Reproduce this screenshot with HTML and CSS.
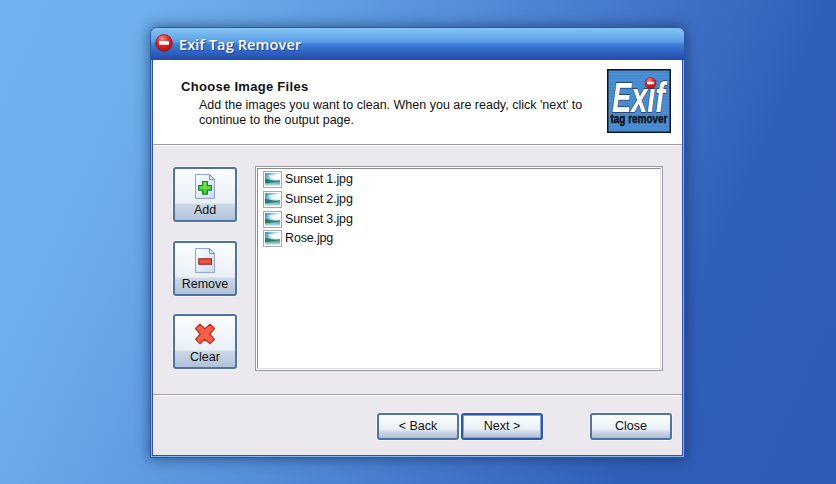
FILE: index.html
```html
<!DOCTYPE html>
<html lang="en">
<head>
<meta charset="utf-8">
<title>Exif Tag Remover</title>
<link rel="stylesheet" href="styles.css">
</head>
<body>
<svg class="defs" width="0" height="0" aria-hidden="true">
  <defs>
    <radialGradient id="red" cx=".4" cy=".25" r=".8"><stop offset="0" stop-color="#f98a80"/><stop offset=".45" stop-color="#e02a25"/><stop offset="1" stop-color="#ab0f12"/></radialGradient>
    <linearGradient id="page" x1="0" y1="0" x2="1" y2="1"><stop offset="0" stop-color="#fff"/><stop offset="1" stop-color="#c9dcf8"/></linearGradient>
    <linearGradient id="green" x1="0" y1="0" x2="0" y2="1"><stop offset="0" stop-color="#8df06a"/><stop offset="1" stop-color="#3ccb2a"/></linearGradient>
    <linearGradient id="sky" x1="0" y1="0" x2="1" y2=".6"><stop offset="0" stop-color="#2f86cf"/><stop offset=".5" stop-color="#a9dcf3"/><stop offset="1" stop-color="#f2fbfe"/></linearGradient>
    <linearGradient id="sea" x1="0" y1="0" x2="0" y2="1"><stop offset="0" stop-color="#5d9fae"/><stop offset="1" stop-color="#b4dff0"/></linearGradient>
    <symbol id="stop" viewBox="0 0 18 18"><circle cx="9" cy="9" r="8.3" fill="url(#red)" stroke="#8e1a22" stroke-width=".9"/><rect x="4" y="7" width="10" height="3.8" rx=".5" fill="#fff"/></symbol>
    <symbol id="sheet" viewBox="0 0 20 25"><path d="M.6.6h14.2l4.6 4.8v19H.6z" fill="url(#page)" stroke="#8c9dd0" stroke-width="1"/><path d="M14.6.8v4.8h4.8z" fill="#e9f1fc" stroke="#6b82bb" stroke-width=".9"/></symbol>
    <symbol id="photo" viewBox="0 0 19 17"><rect x=".5" y=".5" width="18" height="16" fill="#fff" stroke="#a9a9a9"/><rect x="2" y="2" width="15" height="12.500" fill="url(#sky)"/><path d="M5 4.500q6-.5 12-2v5.500q-6 1-9-.5z" fill="#fff" opacity=".85"/><rect x="2" y="11" width="15" height="3.500" fill="url(#sea)"/><path d="M2 7.500c3 .3 6 2.100 9 2.100s4-.5 6-.4v1.600q-7 .2-9 .7T2 12.200z" fill="#2f7d5f"/></symbol>
  </defs>
</svg>
<main class="window">
  <header class="titlebar"><svg class="title-icon"><use href="#stop"/></svg><span class="title">Exif Tag Remover</span></header>
  <div class="client">
    <section class="intro">
      <div class="copy">
        <h1>Choose Image Files</h1>
        <p><span>Add the images you want to clean. When you are ready, click 'next' to</span><br><span>continue to the output page.</span></p>
      </div>
      <div class="logo">
        <svg viewBox="0 0 64 64">
          <defs><pattern id="scan" width="4" height="3" patternUnits="userSpaceOnUse"><rect width="4" height="3" fill="#4a8fd3"/><rect width="4" height="1" fill="#4487ca"/></pattern></defs>
          <rect x=".75" y=".75" width="62.500" height="62.500" fill="url(#scan)" stroke="#0c1420" stroke-width="1.500"/>
          <text class="logo-main" x="5" y="43" textLength="53" lengthAdjust="spacingAndGlyphs">Exif</text>
          <use href="#stop" x="37.500" y="8" width="12" height="12"/>
          <text class="logo-sub" x="3.500" y="54" textLength="57" lengthAdjust="spacingAndGlyphs">tag remover</text>
        </svg>
      </div>
    </section>
    <section class="content">
      <nav class="tools">
        <button class="tool"><svg viewBox="0 0 20 25"><use href="#sheet"/><path d="M7.700 7.600h4.600v4h4v4.600h-4v4H7.700v-4h-4v-4.600h4z" fill="url(#green)" stroke="#17891a" stroke-width="1.300"/></svg><span>Add</span></button>
        <button class="tool"><svg viewBox="0 0 20 25"><use href="#sheet"/><rect x="3.800" y="10.800" width="12.600" height="5.400" fill="#ee5540" stroke="#9c2c24" stroke-width="1.200"/></svg><span>Remove</span></button>
        <button class="tool"><svg viewBox="0 0 20 25"><path d="M4.900 3.300L10 7.700l5.100-4.400 4.300 4.200L14.800 13l4.600 5.400-4.300 4.300L10 18.200l-5.100 4.500-4.300-4.300L5.200 13 .6 7.500z" fill="#fa6048" stroke="#bd2c22" stroke-width="1.200" stroke-linejoin="round"/></svg><span>Clear</span></button>
      </nav>
      <div class="list-frame"><ul class="files">
        <li><svg><use href="#photo"/></svg><span>Sunset 1.jpg</span></li>
        <li><svg><use href="#photo"/></svg><span>Sunset 2.jpg</span></li>
        <li><svg><use href="#photo"/></svg><span>Sunset 3.jpg</span></li>
        <li><svg><use href="#photo"/></svg><span>Rose.jpg</span></li>
      </ul></div>
    </section>
    <footer class="actions"><button class="btn">&lt; Back</button><button class="btn default">Next &gt;</button><button class="btn close">Close</button></footer>
  </div>
</main>
</body>
</html>
```
FILE: styles.css
```css
* { box-sizing: border-box; }
body { margin: 0; height: 484px; overflow: hidden; padding: 27px 0 0 150px; background: linear-gradient(114deg, #70b2ef 0%, #6eb0ed 14%, #69a9e8 22%, #5690da 43%, #4071c7 65%, #305fb9 79%, #2e5bb7 100%); font: 12.5px/15px "Liberation Sans", sans-serif; color: #111; }
.defs { position: absolute; }
.window { width: 535px; height: 431px; display: flex; flex-direction: column; padding: 0 1px 1px; background: #7fb6ee; border: 1px solid #2c55b0; border-radius: 7px 7px 1px 1px; box-shadow: 0 0 13px 1px rgba(20, 40, 80, .6); }
.titlebar { height: 32px; margin: 0 -1px; flex: none; display: flex; align-items: center; padding-left: 4px; border-radius: 6px 6px 0 0; background: linear-gradient(#86c4f2 0, #77b8ef 15%, #5ba0e7 42%, #3a7fd6 52%, #2b5dbc 82%, #2649a4 100%); }
.title-icon { width: 18px; height: 18px; margin-top: -3px; }
.title { margin-left: 6px; margin-top: 2px; font: 600 14.5px/18px "Open Sans", sans-serif; letter-spacing: .13px; color: #fff; text-shadow: 1px 1px 0 #234094; }
.client { flex: 1; display: flex; flex-direction: column; border: 1px solid #2d55af; border-top-width: 0; background: #ebe9ed; }
.intro { height: 85px; flex: none; display: flex; background: #fff; border-bottom: 1px solid #9e9ea2; padding: 9px 11px 0 28px; justify-content: space-between; }
.copy { padding-top: 10px; }
h1 { margin: 0; font-size: 13px; line-height: 15px; letter-spacing: .3px; }
p { margin: 4px 0 0 18px; white-space: nowrap; }
.logo { width: 64px; height: 64px; }
.logo svg { display: block; width: 64px; height: 64px; overflow: visible; }
.logo-main { font: italic bold 42px "Liberation Sans", sans-serif; fill: #fff; stroke: #203a60; stroke-width: 1.5px; paint-order: stroke; }
.logo-sub { font: bold 12px "Liberation Sans", sans-serif; fill: #111; stroke: #111; stroke-width: .4px; }
.content { height: 250px; flex: none; display: flex; align-items: flex-start; gap: 18px; padding: 21px 19px 0 20px; border-top: 1px solid #fff; border-bottom: 1px solid #a0a0a4; }
.tools { display: flex; flex-direction: column; gap: 18.500px; }
button { font: inherit; color: #111; border: 2px solid #4f72a8; border-radius: 3px; padding: 0; box-shadow: 0 0 0 1px #f5f4f7; }
.tool { width: 64px; height: 55px; display: flex; flex-direction: column; align-items: center; padding-top: 5px; background: linear-gradient(#fcfeff 0, #e9f0f6 66%, #cad7e6 70%, #b2c2d8 100%); }
.tool svg { width: 20px; height: 25px; }
.tool span { margin-top: 4px; }
.list-frame { width: 409px; height: 205px; margin-top: -1px; padding: 1px; border: 1px solid #9a9ba0; background: #fff; }
.files { height: 100%; margin: 0; padding: 1px 0 0 5px; list-style: none; border: 1px solid; border-color: #8c8c90 #e0e0e2 #e0e0e2 #8c8c90; letter-spacing: -.15px; }
.files li { height: 19.700px; display: flex; align-items: center; gap: 3px; }
.files svg { width: 19px; height: 17px; }
.actions { flex: 1; display: flex; align-items: flex-start; gap: 2px; padding: 17px 10px 0 224px; border-top: 1px solid #fff; }
.btn { width: 82px; height: 27px; background: linear-gradient(#fdffff, #eaf0f6 60%, #cbd7e6 75%, #aebed5); }
.default { border-color: #2b56b1; box-shadow: inset 0 0 0 1px #78a6e8, 0 0 0 1px #f5f4f7; }
.close { margin-left: auto; }
```
